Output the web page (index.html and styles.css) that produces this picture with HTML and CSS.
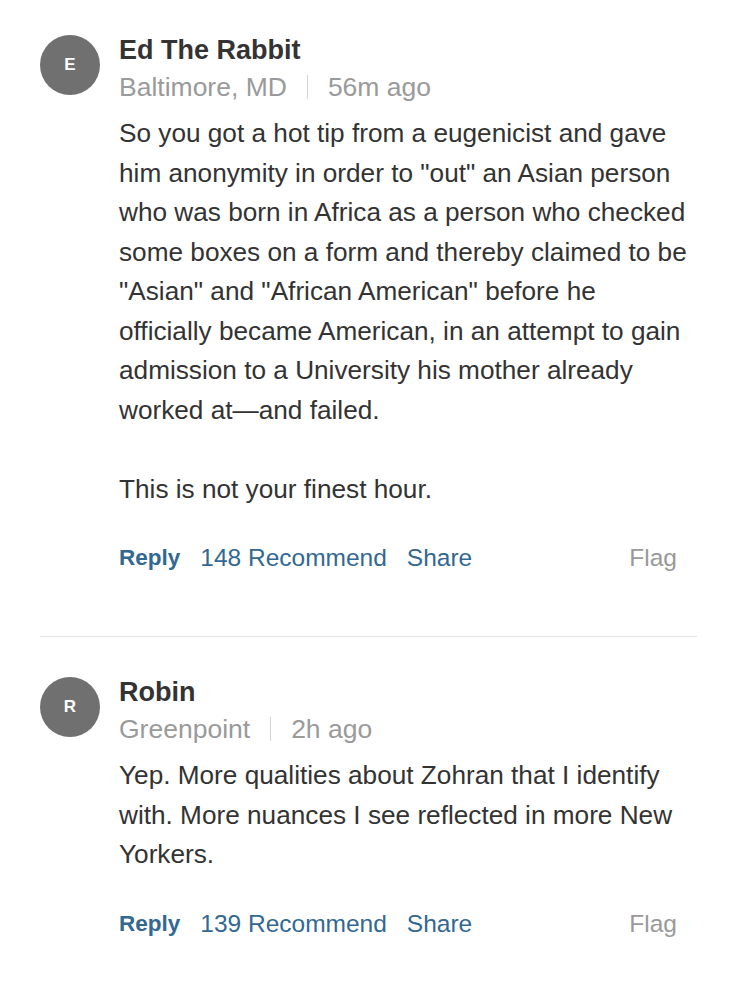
FILE: index.html
```html
<!DOCTYPE html>
<html lang="en">
<head>
  <meta charset="UTF-8" />
  <title>Comments</title>
  <link rel="stylesheet" href="styles.css">
</head>
<body>
  <div class="comments">
    <div class="comment">
      <div class="avatar">E</div>
      <div class="comment-main">
        <div class="name">Ed The Rabbit</div>
        <div class="meta">
          <span>Baltimore, MD</span>
          <span class="sep"></span>
          <span>56m ago</span>
        </div>
        <div class="body">
          <p>So you got a hot tip from a eugenicist and gave him anonymity in order to "out" an Asian person who was born in Africa as a person who checked some boxes on a form and thereby claimed to be "Asian" and "African American" before he officially became American, in an attempt to gain admission to a University his mother already worked at—and failed.</p>
          <p>This is not your finest hour.</p>
        </div>
        <div class="actions">
          <a class="reply">Reply</a>
          <a>148 Recommend</a>
          <a>Share</a>
          <a class="flag">Flag</a>
        </div>
      </div>
    </div>

    <div class="comment">
      <div class="avatar">R</div>
      <div class="comment-main">
        <div class="name">Robin</div>
        <div class="meta">
          <span>Greenpoint</span>
          <span class="sep"></span>
          <span>2h ago</span>
        </div>
        <div class="body">
          <p>Yep. More qualities about Zohran that I identify with. More nuances I see reflected in more New Yorkers.</p>
        </div>
        <div class="actions">
          <a class="reply">Reply</a>
          <a>139 Recommend</a>
          <a>Share</a>
          <a class="flag">Flag</a>
        </div>
      </div>
    </div>
  </div>
</body>
</html>
```

FILE: styles.css
```css
body {
  margin: 0;
  background: #fff;
  font-family: "Liberation Sans", Arial, sans-serif;
  color: #333;
}

.comments {
  padding: 33px 40px 0 40px;
}

.comment {
  display: flex;
  gap: 19px;
  padding-bottom: 58px;
  border-bottom: 1px solid #e2e2e2;
}

.comment + .comment {
  padding-top: 38px;
  border-bottom: none;
}

.avatar {
  flex: none;
  width: 60px;
  height: 60px;
  margin-top: 2px;
  border-radius: 50%;
  background-color: #707070;
  color: #fff;
  font-weight: bold;
  font-size: 17px;
  display: flex;
  align-items: center;
  justify-content: center;
}

.comment-main {
  flex: 1;
}

.name {
  font-weight: bold;
  font-size: 27px;
  line-height: 34px;
  color: #333;
}

.meta {
  display: flex;
  align-items: center;
  font-size: 26.5px;
  line-height: 40px;
  color: #9a9a9a;
}

.sep {
  width: 1px;
  height: 24px;
  background-color: #d5d5d5;
  margin: 0 20px;
}

.body {
  margin-top: 7px;
  max-width: 574px;
  font-size: 26.2px;
  line-height: 39.5px;
  color: #333;
}

.body p {
  margin: 0;
}

.body p + p {
  margin-top: 39.5px;
}

.actions {
  display: flex;
  gap: 20px;
  margin-top: 29px;
  padding-right: 20px;
  font-size: 24.5px;
  line-height: 40px;
  color: #326891;
}

.actions .reply {
  font-weight: bold;
  font-size: 22.5px;
}

.actions .flag {
  margin-left: auto;
  color: #999;
}
```
